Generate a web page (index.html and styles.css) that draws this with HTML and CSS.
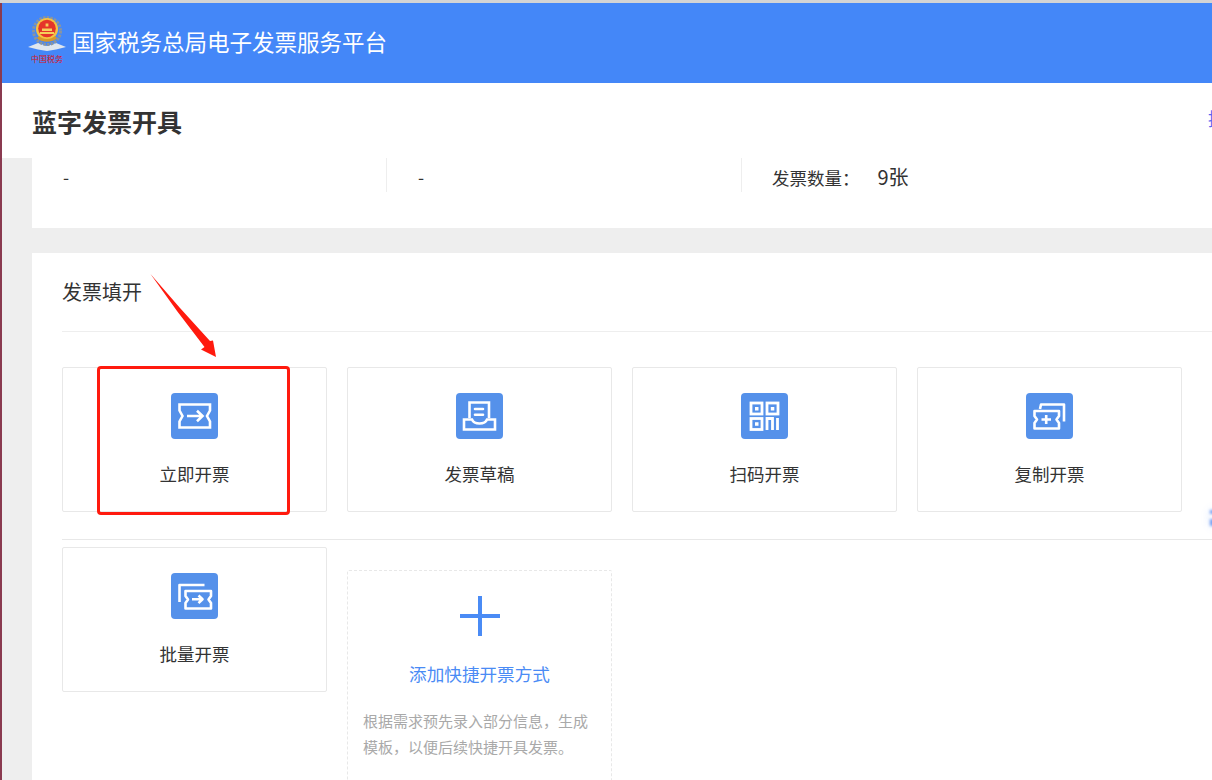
FILE: index.html
```html
<!DOCTYPE html>
<html lang="zh-CN">
<head>
<meta charset="utf-8">
<title>蓝字发票开具</title>
<link rel="stylesheet" href="styles.css">
</head>
<body>
<div class="browser-line"></div>
<div class="page">
  <header class="topbar">
    <div class="logo">
      <svg class="emblem" viewBox="0 0 38 36" width="38" height="36" aria-hidden="true">
        <path d="M0 31 L10 27 L19 30 L28 27 L38 31 L28 33.500 L19 35 L10 33.500Z" fill="#dfe6ee"/>
        <circle cx="19" cy="15" r="13.500" fill="none" stroke="#8b959e" stroke-width="3" stroke-dasharray="2.500 1.200"/>
        <circle cx="19" cy="13" r="11" fill="#f5c242"/>
        <circle cx="19" cy="12.500" r="8.800" fill="#e5352a"/>
        <path d="M12 16h14v2h-14zM14 12.500h10v2.500h-10zM17.600 7.500h2.800v3h-2.800z" fill="#f6cf5a"/>
        <path d="M9 22 C13 27 25 27 29 22 L27 20 C23 24 15 24 11 20Z" fill="#d9982a"/>
      </svg>
      <span class="logo-text">中国税务</span>
    </div>
    <h1 class="platform">国家税务总局电子发票服务平台</h1>
  </header>
  <div class="titlebar">
    <h2 class="page-title">蓝字发票开具</h2>
    <span class="title-action">提</span>
  </div>
  <main class="content">
    <section class="summary">
      <div class="summary-cell">-</div>
      <div class="summary-cell">-</div>
      <div class="summary-cell">发票数量：<span class="count">9张</span></div>
    </section>
    <section class="panel">
      <h3 class="panel-title">发票填开</h3>
      <div class="row first-row">
        <a class="tile">
          <svg class="icon" viewBox="0 0 47 46"><rect width="47" height="46" rx="4" fill="#5591ea"/><g fill="none" stroke="#fff" stroke-width="2.600"><path d="M8.500 11.500H39v6l-3 5.500 3 5.500v6H8.500v-6l3-5.500-3-5.500z"/><path d="M16 23h15M26 17.800l5.500 5.200-5.500 5.200"/></g></svg>
          <span class="tile-label">立即开票</span>
        </a>
        <a class="tile">
          <svg class="icon" viewBox="0 0 47 46"><rect width="47" height="46" rx="4" fill="#5591ea"/><g fill="none" stroke="#fff" stroke-width="2.600"><path d="M13.500 25V9.500H33V25"/><path d="M8 26.500h8c1 2.500 4 4 7.500 4s6.500-1.500 7.500-4h8v10H8z"/><path d="M19 16h8M19 21.800h8" stroke-linecap="round"/></g></svg>
          <span class="tile-label">发票草稿</span>
        </a>
        <a class="tile">
          <svg class="icon" viewBox="0 0 47 46"><rect width="47" height="46" rx="4" fill="#5591ea"/><g fill="none" stroke="#fff" stroke-width="2.800"><rect x="10" y="10" width="11" height="11"/><rect x="26" y="10" width="11" height="11"/><rect x="10" y="25.500" width="11" height="11"/><path d="M26 37V25.500h5.500V37M36.500 25v12"/></g><path d="M14 14h3.500v3.500H14zM29.800 14h3.500v3.500h-3.500zM14 29.300h3.500v3.500H14z" fill="#fff"/></svg>
          <span class="tile-label">扫码开票</span>
        </a>
        <a class="tile">
          <svg class="icon" viewBox="0 0 47 46"><rect width="47" height="46" rx="4" fill="#5591ea"/><g fill="none" stroke="#fff" stroke-width="2.600" stroke-linejoin="round"><path d="M14 16l1-4.500h23v17"/><path d="M8.500 18H33v5l-2.500 3.500 2.500 3.500v5.500H8.500V30l2.500-3.500L8.500 23z"/><path d="M15.500 26.500h9.500M20.200 22v9"/></g></svg>
          <span class="tile-label">复制开票</span>
        </a>
      </div>
      <div class="row second-row">
        <a class="tile">
          <svg class="icon" viewBox="0 0 47 46"><rect width="47" height="46" rx="4" fill="#5591ea"/><g fill="none" stroke="#fff" stroke-width="2.600" stroke-linejoin="round"><path d="M8.500 29V12h25"/><path d="M14.500 18H40v5l-2.500 3.500L40 30v5.500H14.500V30l2.500-3.500-2.500-3.500z"/><path d="M21 26.300h9.500M27.500 22.500l4 3.800-4 3.800"/></g></svg>
          <span class="tile-label">批量开票</span>
        </a>
        <a class="tile-add">
          <svg class="plus" viewBox="0 0 40 40" width="40" height="40"><path d="M18 0h4v18h18v4H22v18h-4V22H0v-4h18z" fill="#4a8bf5"/></svg>
          <span class="add-label">添加快捷开票方式</span>
          <p class="add-desc">根据需求预先录入部分信息，生成模板，以便后续快捷开具发票。</p>
        </a>
      </div>
    </section>
  </main>
</div>
<div class="float-tab"></div>
<div class="note-box"></div>
<svg class="note-arrow" viewBox="0 0 70 90" width="70" height="90" aria-hidden="true"><path d="M0.500 0 L30 34 L60 67 L63 66.500 L66 83 L51 75.500 L54.500 73 L27 37Z" fill="#ff1a0e"/></svg>
</body>
</html>
```

FILE: styles.css
```css
* { box-sizing: border-box; }
html, body { margin: 0; height: 780px; overflow: hidden; background: #fff; }
body {
  font-family: "Noto Sans CJK SC", "Liberation Sans", sans-serif;
  color: #333;
  display: flex;
  flex-direction: column;
}
.browser-line { height: 3px; background: #d4d4d4; flex: none; }
.page {
  flex: 1;
  min-height: 0;
  border-left: 2px solid #8a3a50;
  display: flex;
  flex-direction: column;
  overflow: hidden;
}
.topbar {
  height: 80px;
  flex: none;
  background: #4487f8;
  display: flex;
  align-items: center;
  padding-left: 26px;
  gap: 6px;
}
.logo { width: 38px; display: flex; flex-direction: column; align-items: center; margin-top: -6px; }
.emblem { display: block; }
.logo-text { font-size: 8px; line-height: 11px; color: #d8141c; white-space: nowrap; margin-top: 1px; }
.platform { margin: -4px 0 0; font-size: 22.500px; font-weight: 400; line-height: 32px; color: #fff; white-space: nowrap; }
.titlebar {
  height: 75px;
  flex: none;
  width: 1240px;
  background: #fff;
  display: flex;
  align-items: center;
  justify-content: space-between;
  padding-left: 30px;
  padding-right: 16px;
}
.page-title { margin: 0; font-size: 25px; font-weight: 700; line-height: 36px; color: #333; }
.title-action { font-size: 18px; line-height: 24px; color: #5a66f0; padding-bottom: 5px; }
.content { flex: 1; min-height: 0; background: #eee; padding-left: 30px; overflow: hidden; }
.summary {
  height: 70px;
  width: 1300px;
  background: #fff;
  display: flex;
  font-size: 17.500px;
  margin-bottom: 25px;
}
.summary-cell { width: 355px; height: 34px; padding-left: 31px; border-right: 1px solid #eee; color: #333; padding-top: 2px; line-height: 34px; }
.summary-cell:last-child { border-right: 0; padding-left: 30px; }
.count { margin-left: 18px; font-size: 20px; }
.panel { width: 1300px; height: 600px; background: #fff; padding: 0 30px; }
.panel-title {
  margin: 0;
  height: 79px;
  font-size: 20px;
  font-weight: 400;
  line-height: 78px;
  color: #333;
  border-bottom: 1px solid #eee;
}
.row { display: flex; gap: 20px; align-items: flex-start; }
.first-row { padding: 35px 0 27px; border-bottom: 1px solid #e8e8e8; }
.second-row { padding-top: 7px; }
.tile {
  width: 265px;
  height: 145px;
  flex: none;
  border: 1px solid #e8e8e8;
  border-radius: 2px;
  display: flex;
  flex-direction: column;
  align-items: center;
  padding-top: 25px;
}
.icon { width: 47px; height: 46px; display: block; }
.tile-label { margin-top: 22px; font-size: 17.500px; line-height: 26px; color: #333; }
.tile-add {
  width: 265px;
  height: 240px;
  flex: none;
  margin-top: 23px;
  border: 1px dashed #e8e8e8;
  border-radius: 2px;
  display: flex;
  flex-direction: column;
  align-items: center;
  padding: 25px 15px 0;
}
.plus { display: block; }
.add-label { margin-top: 24px; font-size: 17.600px; line-height: 28px; color: #4a8bf5; }
.add-desc { margin: 20px 0 0; font-size: 15px; line-height: 26px; color: #a9a9a9; }
.float-tab {
  position: absolute;
  left: 1210px;
  top: 510px;
  width: 6px;
  height: 16px;
  background: linear-gradient(#6f9cf2 0 4px, transparent 4px 9px, #6f9cf2 9px);
  box-shadow: 0 0 8px rgba(90, 140, 240, .2);
  filter: blur(1.500px);
}
.note-box {
  position: absolute;
  left: 97px;
  top: 366px;
  width: 193px;
  height: 149px;
  border: 3px solid #ff1a0e;
  border-radius: 4px;
}
.note-arrow { position: absolute; left: 150px; top: 274px; }
```
